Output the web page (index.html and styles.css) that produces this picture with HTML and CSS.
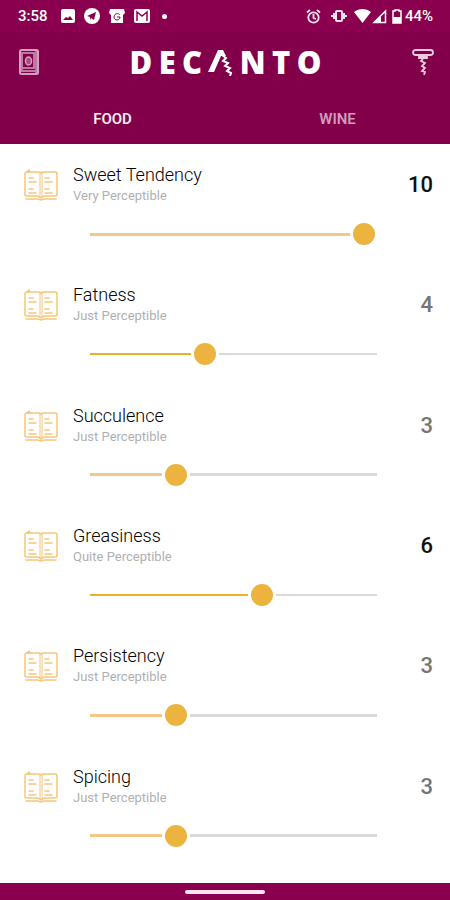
FILE: index.html
```html
<!DOCTYPE html>
<html lang="en">
<head>
    <meta charset="UTF-8">
    <meta name="viewport" content="width=device-width, initial-scale=1.0">
    <title>Decanto</title>
    <link rel="stylesheet" href="styles.css">
</head>
<body>
    <svg width="0" height="0" class="symbols" aria-hidden="true">
        <symbol id="book" viewBox="0 0 34 34">
            <g fill="none" stroke="#f3c67c" stroke-width="1.5" stroke-linecap="round" stroke-linejoin="round">
                <path d="M17 5 C16 4 15 4 14 4 H3 C1 4 1 5 1 6 V27 C1 28 2 28 3 28 H13 C15 28 16 29 17 30 C18 29 19 28 21 28 H31 C32 28 33 28 33 27 V6 C33 5 33 4 31 4 H20 C19 4 18 4 17 5 Z"/>
                <path d="M16 5 V29 M18 5 V29" stroke-width="1"/>
                <path d="M2 31 H14 L17 32 L20 31 H32"/>
                <path d="M3 4 L5 2 L6 4 Z" fill="#f0b64f"/>
                <path d="M5 10 H9 M5 14 H12 M5 21 H9 M5 25 H12 M21 10 H25 M21 14 H28 M21 21 H25 M21 25 H28"/>
            </g>
        </symbol>
    </svg>

    <header>
        <div class="status-bar">
            <span class="time">3:58</span>
            <svg width="14" height="14" viewBox="0 0 14 14"><rect width="14" height="14" rx="2" fill="#fff"/><path d="M2 11 L5 8 L7 9 L9 7 L12 11 Z" fill="#8a004e"/></svg>
            <svg width="16" height="16" viewBox="0 0 16 16"><circle cx="8" cy="8" r="8" fill="#fff"/><path d="M3 8 L12 4 L10 12 L7 10 L6 12 L6 9 Z" fill="#8a004e"/></svg>
            <svg width="16" height="16" viewBox="0 0 16 16"><path d="M1 1 H15 L16 5 L14 7 V15 H2 V7 L0 5 Z" fill="#fff"/><path d="M10.500 6.500 C8.500 4.500 5 6 5 9 C5 13 11 13 11 9 H8" fill="none" stroke="#8a004e"/></svg>
            <svg width="16" height="14" viewBox="0 0 16 14"><rect width="16" height="14" rx="2" fill="#fff"/><path d="M3 12 V3 L8 7 L13 3 V12" fill="none" stroke="#8a004e" stroke-width="1.5"/></svg>
            <span class="dot"></span>
            <span class="spacer"></span>
            <svg class="alarm" width="15" height="15" viewBox="0 0 15 15" fill="none" stroke="#f6e3ed" stroke-width="1.800"><circle cx="7.500" cy="8.500" r="5.200"/><path d="M7.500 5 V9 L10 10 M1 3.500 L4 1 M11 1 L14 3.500"/></svg>
            <svg class="vibrate" width="16" height="14" viewBox="0 0 16 14" fill="none" stroke="#f6e3ed" stroke-width="2"><rect x="5" y="2" width="6" height="10" rx="1"/><path d="M3 4 V10 M1 6 V8 M13 4 V10 M15 6 V8"/></svg>
            <svg width="17" height="14" viewBox="0 0 17 14"><path d="M0 3 C5 -1 12 -1 17 3 L8.500 14 Z" fill="#fff"/></svg>
            <svg class="signal" width="15" height="15" viewBox="0 0 15 15"><path d="M13.500 2 V13.500 H2 Z" fill="none" stroke="#fff" stroke-width="1.500"/><path d="M1 14 L9 6 V14 Z" fill="#fff"/></svg>
            <svg class="battery" width="10" height="15" viewBox="0 0 10 15"><path d="M3 1 H7 V2 H9 V14 H1 V2 H3 Z" fill="none" stroke="#fff" stroke-width="1.500"/><path d="M1 8 H9 V14 H1 Z" fill="#fff"/></svg>
            <span class="percent">44%</span>
        </div>

        <div class="title-bar">
            <button class="icon-button" aria-label="Guide">
                <svg width="20" height="26" viewBox="0 0 20 26" fill="none" stroke="#d3a0bf" stroke-width="2"><rect x="1" y="1" width="18" height="24" rx="1.500"/><path d="M3 3 V21 M2 22 H16 M4 4 H15 V19 H4 M17 1 V24" stroke-width="1.500"/><ellipse cx="9.500" cy="12" rx="3" ry="4" fill="#a84c80" stroke-width="1.500"/></svg>
            </button>
            <h1 class="logo" aria-label="Decanto">
                <span>D</span><span>E</span><span>C</span>
                <svg width="25" height="28" viewBox="0 0 25 28"><path d="M0 24 L10 2 H15 L18 8 L13 8 L6 24 Z" fill="#fff"/><path d="M14 7 L18 10 L15 13 L20 15 L17 18 L22 20 L19 23 L23 25 L22 28" fill="none" stroke="#fff" stroke-width="2"/></svg>
                <span>N</span><span>T</span><span>O</span>
            </h1>
            <button class="icon-button" aria-label="Corkscrew">
                <svg width="22" height="26" viewBox="0 0 22 26" fill="none" stroke="#eccbdc" stroke-width="1.800"><rect x="1" y="1" width="20" height="5" rx="2.500"/><path d="M7 7 H15 V9 H7 Z" fill="#f3dce9"/><path d="M11 10 L9 12 L13 14 L10 17 L13 19 L10 22 L13 23 L12 26"/></svg>
            </button>
        </div>

        <nav class="tabs">
            <a href="#food" class="active">FOOD</a>
            <a href="#wine">WINE</a>
        </nav>
    </header>

    <main id="food">
        <section class="item">
            <svg class="book" aria-hidden="true"><use href="#book"/></svg>
            <div class="text">
                <label for="sweet">Sweet Tendency</label>
                <p>Very Perceptible</p>
            </div>
            <output for="sweet" class="strong">10</output>
            <input type="range" id="sweet" class="soft full" min="0" max="10" value="10" style="--fill: 100%">
        </section>
        <section class="item">
            <svg class="book" aria-hidden="true"><use href="#book"/></svg>
            <div class="text">
                <label for="fatness">Fatness</label>
                <p>Just Perceptible</p>
            </div>
            <output for="fatness">4</output>
            <input type="range" id="fatness" min="0" max="10" value="4" style="--fill: 40%">
        </section>
        <section class="item">
            <svg class="book" aria-hidden="true"><use href="#book"/></svg>
            <div class="text">
                <label for="succulence">Succulence</label>
                <p>Just Perceptible</p>
            </div>
            <output for="succulence">3</output>
            <input type="range" id="succulence" class="soft" min="0" max="10" value="3" style="--fill: 30%">
        </section>
        <section class="item">
            <svg class="book" aria-hidden="true"><use href="#book"/></svg>
            <div class="text">
                <label for="greasiness">Greasiness</label>
                <p>Quite Perceptible</p>
            </div>
            <output for="greasiness" class="strong">6</output>
            <input type="range" id="greasiness" min="0" max="10" value="6" style="--fill: 60%">
        </section>
        <section class="item">
            <svg class="book" aria-hidden="true"><use href="#book"/></svg>
            <div class="text">
                <label for="persistency">Persistency</label>
                <p>Just Perceptible</p>
            </div>
            <output for="persistency">3</output>
            <input type="range" id="persistency" class="soft" min="0" max="10" value="3" style="--fill: 30%">
        </section>
        <section class="item">
            <svg class="book" aria-hidden="true"><use href="#book"/></svg>
            <div class="text">
                <label for="spicing">Spicing</label>
                <p>Just Perceptible</p>
            </div>
            <output for="spicing">3</output>
            <input type="range" id="spicing" class="soft" min="0" max="10" value="3" style="--fill: 30%">
        </section>
    </main>

    <footer><span class="home-bar"></span></footer>
</body>
</html>
```
FILE: styles.css
```css
* {
    box-sizing: border-box;
}
body {
    margin: 0;
    min-height: 100vh;
    display: flex;
    flex-direction: column;
    background-color: #fff;
    font-family: Roboto, sans-serif;
}
svg {
    display: block;
    flex: none;
}
.symbols {
    position: absolute;
}
header {
    background-color: #82004a;
    color: #fff;
}
.status-bar {
    display: flex;
    align-items: center;
    height: 32px;
    padding: 0 17px 0 18px;
    gap: 9px;
    background-color: #8a004e;
}
.time, .percent {
    font-size: 15px;
    font-weight: 500;
}
.time {
    margin-right: 4px;
}
.dot {
    width: 5px;
    height: 5px;
    margin-left: 3px;
    border-radius: 50%;
    background-color: #fff;
}
.spacer {
    flex: 1;
}
.alarm {
    margin-right: 1px;
}
.vibrate {
    margin-right: -2px;
}
.signal {
    margin-left: -8px;
}
.battery {
    margin-left: -4px;
}
.percent {
    margin-left: -6px;
}
.title-bar {
    display: flex;
    align-items: center;
    justify-content: space-between;
    height: 60px;
    padding: 0 16px 0 19px;
}
.icon-button {
    padding: 0;
    border: none;
    background: none;
    cursor: pointer;
}
.logo {
    display: flex;
    justify-content: space-between;
    align-items: center;
    width: 192px;
    margin: 0;
    font-family: "Open Sans", sans-serif;
    font-size: 31px;
    font-weight: 800;
    line-height: 32px;
}
.tabs {
    display: flex;
    height: 52px;
}
.tabs a {
    flex: 1;
    line-height: 54px;
    text-align: center;
    font-size: 15px;
    font-weight: 600;
    color: #cf9dba;
    text-decoration: none;
}
.tabs .active {
    color: #f8eaf1;
}
main {
    flex: 1;
    display: flex;
    flex-direction: column;
    padding-bottom: 17px;
}
.item {
    flex: 1;
    display: grid;
    grid-template-columns: 34px 1fr auto;
    grid-template-rows: auto 1fr;
    column-gap: 15px;
    padding: 20px 17px 0 24px;
}
.book {
    width: 34px;
    height: 34px;
    margin-top: 4px;
}
.text label {
    display: block;
    font-size: 18px;
    line-height: 22px;
    font-weight: 300;
    color: #000;
}
.text p {
    margin: 0;
    font-size: 13px;
    line-height: 20px;
    color: #b0b0b0;
}
output {
    align-self: center;
    font-size: 22px;
    line-height: 40px;
    font-weight: 500;
    color: #757575;
}
output.strong {
    color: #111;
}
input[type="range"] {
    --color: #ecb02c;
    --thick: 2px;
    grid-column: 1 / -1;
    -webkit-appearance: none;
    appearance: none;
    height: 22px;
    margin: 17px 45px 0 55px;
    background-image: linear-gradient(to right, var(--color) var(--fill), #dadada var(--fill));
    background-size: calc(100% - 22px) var(--thick);
    background-position: center;
    background-repeat: no-repeat;
    background-color: transparent;
}
input[type="range"]::-webkit-slider-thumb {
    -webkit-appearance: none;
    width: 22px;
    height: 22px;
    border-radius: 50%;
    background-color: #edb33f;
    box-shadow: 0 0 0 3px #fff;
}
input.soft {
    --color: #f3c689;
    --thick: 3px;
}
input.full {
    margin-right: 58px;
}
footer {
    display: flex;
    justify-content: center;
    align-items: center;
    height: 17px;
    background-color: #8a004e;
}
.home-bar {
    width: 80px;
    height: 4px;
    border-radius: 2px;
    background-color: #f8e4ef;
}
```
